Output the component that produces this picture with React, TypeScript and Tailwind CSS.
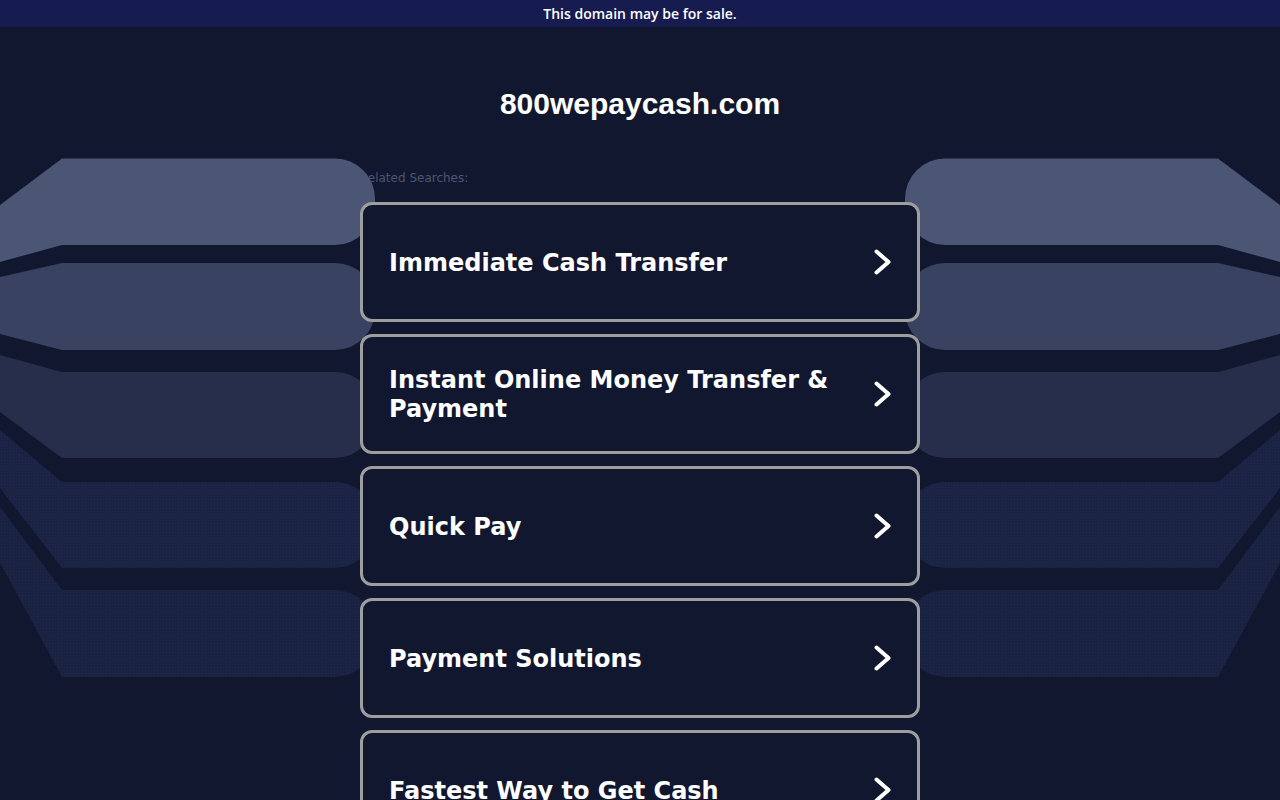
const searches = [
  'Immediate Cash Transfer',
  'Instant Online Money Transfer & Payment',
  'Quick Pay',
  'Payment Solutions',
  'Fastest Way to Get Cash',
];

// [top, bottom, y at x=0 for top edge, y at x=0 for bottom edge, fill, dotted]
const bands: [number, number, number, number, string, boolean][] = [
  [158.5, 245, 205, 262, '#4b5574', false],
  [263, 350, 277, 334, '#3a4261', false],
  [372, 458, 355, 412, '#262e4c', false],
  [482, 568, 430, 488, '#1b2344', true],
  [590, 677, 507, 563, '#1a2242', true],
];

function bandPath(t: number, b: number, lt: number, lb: number) {
  const r = 40;
  return `M0 ${lt} L62 ${t} L${375 - r} ${t} A${r} ${r} 0 0 1 375 ${t + r} L375 ${b - r} A${r} ${r} 0 0 1 ${375 - r} ${b} L62 ${b} L0 ${lb} Z`;
}

function Bands({ mirror }: { mirror?: boolean }) {
  const id = mirror ? 'dotsR' : 'dotsL';
  return (
    <svg
      width="376"
      height="700"
      viewBox="0 0 376 700"
      className={mirror ? 'absolute top-0 right-0 -scale-x-100' : 'absolute top-0 left-0'}
    >
      <defs>
        <pattern id={id} width="3" height="3" patternUnits="userSpaceOnUse">
          <rect x="1" y="1" width="1" height="1" fill="#2b3560" />
        </pattern>
      </defs>
      {bands.map(([t, b, lt, lb, fill, dotted], i) => (
        <g key={i}>
          <path d={bandPath(t, b, lt, lb)} fill={fill} />
          {dotted && <path d={bandPath(t, b, lt, lb)} fill={`url(#${id})`} opacity="0.35" />}
        </g>
      ))}
    </svg>
  );
}

function Chevron() {
  return (
    <svg width="17" height="26" viewBox="0 0 17 26" className="shrink-0">
      <path d="M2.5 2.5 L14.5 13 L2.5 23.5" fill="none" stroke="white" strokeWidth="4" strokeLinecap="round" strokeLinejoin="round" />
    </svg>
  );
}

export default function App() {
  return (
    <div className="relative min-h-screen overflow-hidden bg-[#11172e]">
      <Bands />
      <Bands mirror />

      <div className="relative h-[27px] bg-[#161b50] flex items-center justify-center text-[14px] font-semibold text-white font-['Open_Sans',sans-serif]">
        This domain may be for sale.
      </div>

      <div className="w-[560px] mx-auto">
        <h1 className="pt-[59px] text-center text-[30px] leading-[36px] font-bold text-white font-['Liberation_Sans',Arial,sans-serif]">
          800wepaycash.com
        </h1>
        <div className="mt-[48px] text-[12px] leading-4 text-[#4c5575] font-['DejaVu_Sans',Verdana,sans-serif]">
          Related Searches:
        </div>
        <div className="relative z-20 mt-[16px] flex flex-col gap-3 pb-10">
          {searches.map((s) => (
            <a
              key={s}
              href="#"
              className="h-[120px] flex items-center justify-between pl-[26px] pr-[26px] rounded-[12px] border-[3px] border-[#9e9e9e] bg-[#11172e]"
            >
              <span className="max-w-[460px] pt-[2px] text-[24px] leading-[29px] font-bold text-white font-['DejaVu_Sans',Verdana,sans-serif]">
                {s}
              </span>
              <Chevron />
            </a>
          ))}
        </div>
      </div>
    </div>
  );
}
